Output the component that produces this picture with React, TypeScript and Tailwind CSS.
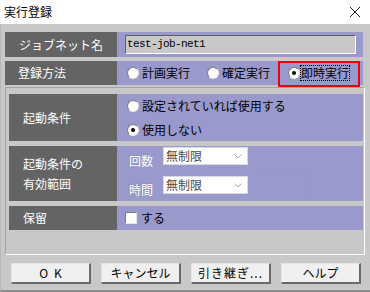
import React from "react";

const jp = { fontFamily: '"Noto Sans CJK JP", "Noto Sans", sans-serif' };

function Radio({ checked }: { checked?: boolean }) {
  return (
    <div className="w-[12px] h-[12px] rounded-full bg-white border border-t-[#7a7a7a] border-l-[#7a7a7a] border-r-[#e8e8e8] border-b-[#e8e8e8] flex items-center justify-center shrink-0">
      {checked && <div className="w-[4px] h-[4px] rounded-full bg-black" />}
    </div>
  );
}

function Select() {
  return (
    <div className="w-[85px] h-[18px] bg-white border border-[#d8d8e8] flex items-center justify-between pl-[2px] pr-[5px] text-[12px] text-[#4a4a4a] leading-none">
      <span>無制限</span>
      <svg width="8" height="5" viewBox="0 0 8 5">
        <path d="M0.5 0.5 L4 4 L7.5 0.5" fill="none" stroke="#a8a8a8" strokeWidth="1" />
      </svg>
    </div>
  );
}

function Btn({ children, cls }: { children: React.ReactNode; cls?: string }) {
  return (
    <div className={"w-[80px] h-[21px] bg-[#f0f0f0] border-t border-l border-t-[#e4e4e4] border-l-[#e4e4e4] border-r-2 border-b-2 border-r-[#6a6a6a] border-b-[#6a6a6a] flex items-center justify-center text-[12px] text-black leading-none " + (cls ?? "")}>
      {children}
    </div>
  );
}

export default function App() {
  return (
    <div className="w-[370px] h-[292px] bg-[#c8c8c8] flex flex-col overflow-hidden" style={jp}>
      <div className="h-[24px] bg-white flex items-center justify-between pl-[4px] pr-[9px]">
        <span className="text-[12px] text-black leading-none">実行登録</span>
        <svg width="12" height="12" viewBox="0 0 12 12">
          <path d="M1 1 L11 11 M11 1 L1 11" stroke="#222" strokeWidth="1" fill="none" />
        </svg>
      </div>
      <div className="flex-1 flex flex-col pl-[4px] pr-[7px] pt-[8px] border-b-2 border-[#8c8c8c] border-l border-l-[#b8b8b8]">
        {/* Row 1 */}
        <div className="flex h-[25px]">
          <div className="w-[112px] bg-[#646464] flex items-center pl-[14px] text-white text-[12px]">ジョブネット名</div>
          <div className="flex-1 bg-[#9999cc] flex items-center pl-[8px] pr-[7px]">
            <div className="w-full h-[19px] bg-[#c8c8c8] border border-t-[#606060] border-l-[#606060] border-r-white border-b-white flex items-center pl-[1px] text-[11px] text-black tracking-[-0.6px]" style={{ fontFamily: '"Liberation Mono", monospace' }}>
              test-job-net1
            </div>
          </div>
        </div>
        {/* Row 2 */}
        <div className="flex h-[24px] mt-[4px] relative">
          <div className="w-[112px] bg-[#646464] flex items-center pl-[13px] text-white text-[12px]">登録方法</div>
          <div className="flex-1 bg-[#9999cc] flex items-center pl-[10px] text-[12px] text-black">
            <div className="flex items-center gap-[3px] w-[80px]">
              <Radio />
              <span>計画実行</span>
            </div>
            <div className="flex items-center gap-[3px] w-[81px]">
              <Radio />
              <span>確定実行</span>
            </div>
            <div className="flex items-center gap-[0px]">
              <Radio checked />
              <span className="border border-dotted border-black leading-[14px] px-[0px]">即時実行</span>
            </div>
          </div>
          <div className="absolute left-[273px] top-0 w-[82px] h-[26px] border-2 border-[#ee0000]" />
        </div>
        {/* Group */}
        <div className="mt-[2px] w-[360px] h-[168px] border border-t-[#a4a4a4] border-l-[#a4a4a4] border-r-white border-b-white pt-[6px] pl-[3px] pr-[1px] flex flex-col gap-[5px]">
          <div className="flex h-[47px]">
            <div className="w-[108px] bg-[#646464] flex items-center pl-[14px] text-white text-[12px]">起動条件</div>
            <div className="flex-1 bg-[#9999cc] flex flex-col justify-center gap-[8px] pl-[10px] text-[12px] text-black">
              <div className="flex items-center gap-[3px] h-[16px]">
                <Radio />
                <span>設定されていれば使用する</span>
              </div>
              <div className="flex items-center gap-[3px] h-[16px]">
                <Radio checked />
                <span>使用しない</span>
              </div>
            </div>
          </div>
          <div className="flex h-[55px]">
            <div className="w-[108px] bg-[#646464] flex flex-col justify-center pl-[14px] text-white text-[12px] leading-[20px]">
              <span>起動条件の</span>
              <span>有効範囲</span>
            </div>
            <div className="flex-1 bg-[#9999cc] flex flex-col pt-[1px] pl-[12px] gap-[11px] text-[12px]">
              <div className="flex items-start gap-[10px] h-[18px]">
                <span className="mt-[7px] leading-[14px] text-white [text-shadow:-1px_-1px_0_#9090b0]">回数</span>
                <Select />
              </div>
              <div className="flex items-start gap-[10px] h-[18px]">
                <span className="mt-[7px] leading-[14px] text-white [text-shadow:-1px_-1px_0_#9090b0]">時間</span>
                <Select />
                <div className="ml-[3px] -mt-[6px] w-[46px] h-[23px] border-t border-r border-[#9494c6]" />
              </div>
            </div>
          </div>
          <div className="flex h-[24px]">
            <div className="w-[108px] bg-[#646464] flex items-center pl-[14px] text-white text-[12px]">保留</div>
            <div className="flex-1 bg-[#9999cc] flex items-center pl-[8px] gap-[4px] text-[12px] text-black">
              <div className="w-[12px] h-[12px] bg-white border border-t-[#7a7a7a] border-l-[#7a7a7a] border-r-[#e8e8e8] border-b-[#e8e8e8]" />
              <span>する</span>
            </div>
          </div>
        </div>
        {/* Buttons */}
        <div className="mt-[8px] flex gap-[10px] pl-[6px]">
          <Btn cls="tracking-[6px] pl-[6px]">OK</Btn>
          <Btn>キャンセル</Btn>
          <Btn cls="tracking-[1px]">引き継ぎ...</Btn>
          <Btn>ヘルプ</Btn>
        </div>
      </div>
    </div>
  );
}
